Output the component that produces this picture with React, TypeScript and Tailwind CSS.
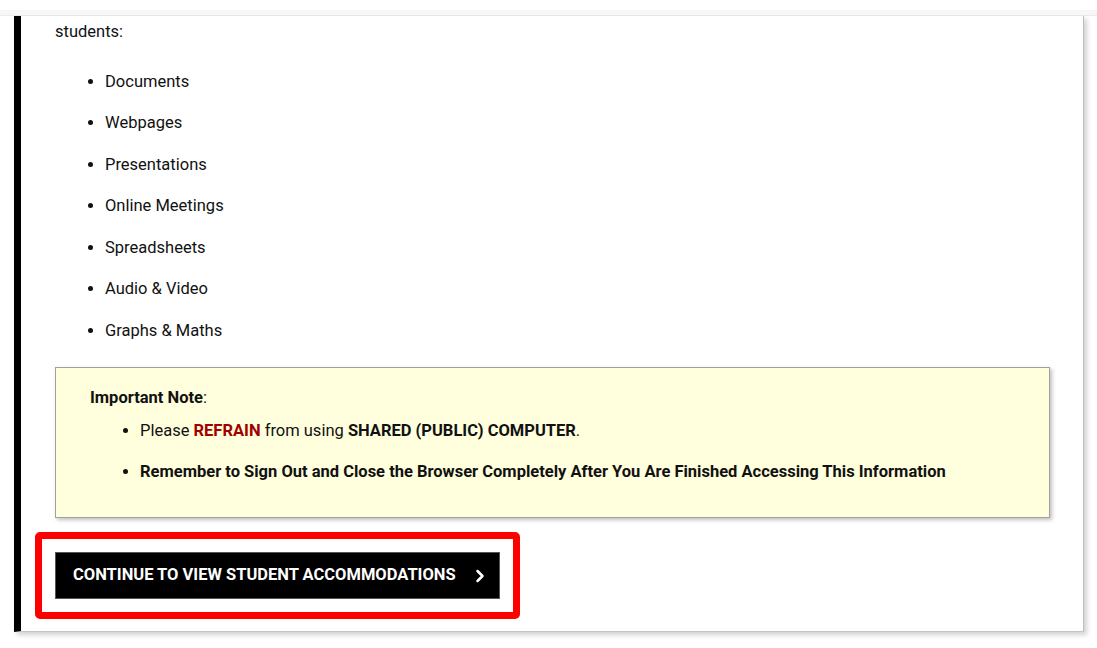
import { ChevronRight } from 'lucide-react';

const items = [
  'Documents',
  'Webpages',
  'Presentations',
  'Online Meetings',
  'Spreadsheets',
  'Audio & Video',
  'Graphs & Maths',
];

export default function App() {
  return (
    <div className="min-h-[648px] bg-white text-[16.5px] text-[#111] font-['Roboto',sans-serif]">
      {/* top strip */}
      <div className="h-[10px] bg-white" />
      <div className="h-[6px] bg-[#f7f7f7] border-b border-[#ebebeb]" />

      {/* card */}
      <div className="ml-[14px] w-[1070px] border-l-[7px] border-black border-r border-r-[#bdbdbd] border-b border-b-[#c4c4c4] shadow-[3px_3px_5px_rgba(0,0,0,0.18)] bg-white pl-[34px] pr-[33px] pb-[12px]">
        <p className="pt-[4px] leading-[24px]">students:</p>

        <ul className="mt-[25.5px] pl-[50px] list-disc space-y-[17.5px]">
          {items.map((t) => (
            <li key={t} className="leading-[24px]">
              {t}
            </li>
          ))}
        </ul>

        {/* important note */}
        <div className="mt-[24.5px] h-[151px] border border-[#a0a0a0] bg-[#ffffdd] shadow-[2px_2px_4px_rgba(0,0,0,0.25)] pl-[34px] pt-[18px]">
          <p className="leading-[24px]">
            <span className="font-bold">Important Note</span>:
          </p>
          <ul className="mt-[9px] pl-[50px] list-disc space-y-[17px]">
            <li className="leading-[24px]">
              Please <span className="font-bold text-[#a00000]">REFRAIN</span> from using{' '}
              <span className="font-bold">SHARED (PUBLIC) COMPUTER</span>.
            </li>
            <li className="leading-[24px] font-bold">
              Remember to Sign Out and Close the Browser Completely After You Are Finished Accessing This Information
            </li>
          </ul>
        </div>

        {/* button with highlight */}
        <div className="mt-[14px] -ml-[20px] inline-block border-[7px] border-[#ff0000] rounded-[5px] px-[13px] py-[13px]">
          <button className="flex items-center h-[47px] w-[445px] bg-black border border-[#555] pl-[17px] text-white font-bold uppercase text-[16.5px]">
            Continue to view student accommodations
            <ChevronRight className="ml-[14px] w-[20px] h-[20px]" strokeWidth={3} />
          </button>
        </div>
      </div>
    </div>
  );
}
